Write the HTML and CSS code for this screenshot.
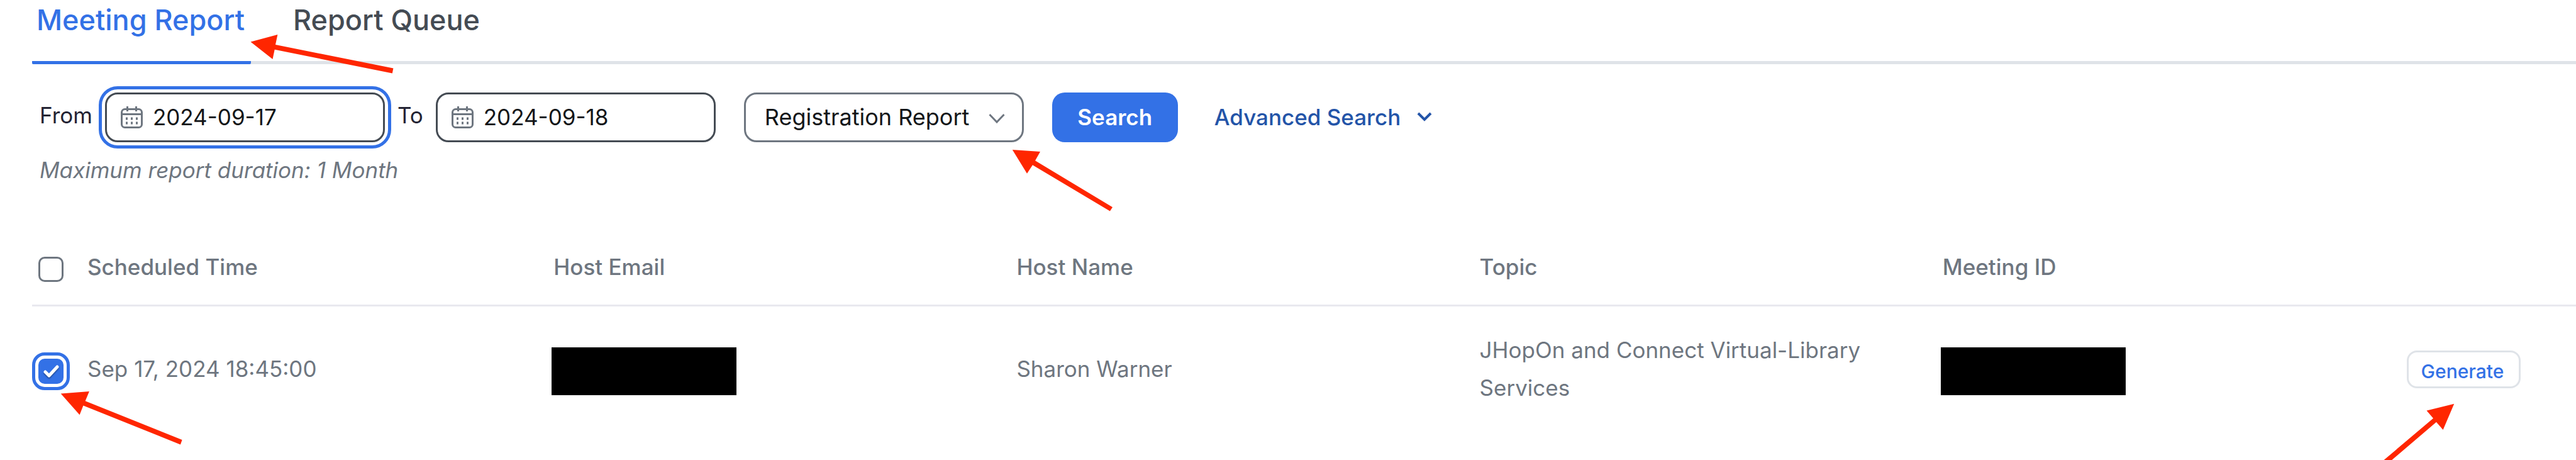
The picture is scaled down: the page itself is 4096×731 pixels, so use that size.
FILE: index.html
```html
<!DOCTYPE html>
<html lang="en">
<head>
    <meta charset="UTF-8" />
    <title>Meeting Report</title>
    <link rel="stylesheet" href="styles.css">
</head>
<body>
<div class="page">
    <nav class="tabs">
        <div class="tab current">
            <a href="#">Meeting Report</a>
            <svg class="arrow arrow-tab" width="228" height="63"><polygon points="0.5,12.5 43.4,1 40,17 227.4,54.5 225.8,62.5 38.7,24.8 35.5,40"/></svg>
        </div>
        <div class="tab"><a href="#">Report Queue</a></div>
    </nav>

    <form class="filters">
        <label for="from">From</label>
        <div class="date focus">
            <input type="text" id="from" value="2024-09-17">
            <svg class="calendar" viewBox="0 0 35 35">
                <rect x="1.5" y="4.5" width="32" height="29" rx="5"/>
                <path d="M1.5 12.5h32M10.5 0v8M24.5 0v8"/>
                <path class="dots" d="M8 19.5h3M16 19.5h3M24 19.5h3M8 26.5h3M16 26.5h3M24 26.5h3"/>
            </svg>
        </div>
        <label for="to">To</label>
        <div class="date">
            <input type="text" id="to" value="2024-09-18">
            <svg class="calendar" viewBox="0 0 35 35">
                <rect x="1.5" y="4.5" width="32" height="29" rx="5"/>
                <path d="M1.5 12.5h32M10.5 0v8M24.5 0v8"/>
                <path class="dots" d="M8 19.5h3M16 19.5h3M24 19.5h3M8 26.5h3M16 26.5h3M24 26.5h3"/>
            </svg>
        </div>
        <div class="report-type">
            <select aria-label="Report type">
                <option>Registration Report</option>
            </select>
            <svg class="chevron" viewBox="0 0 26 16"><path d="M1.5 2L13 14L24.5 2"/></svg>
            <svg class="arrow arrow-select" width="161" height="99"><polygon points="0.8,1 45,4 37,18.2 160,92.3 155.9,98.4 32.9,25.3 24,38.8"/></svg>
        </div>
        <button type="button" class="search">Search</button>
        <a href="#" class="advanced">Advanced Search
            <svg viewBox="0 0 24 16"><path d="M2 2l10 10L22 2"/></svg>
        </a>
    </form>
    <p class="hint">Maximum report duration: 1 Month</p>

    <table class="report">
        <thead>
            <tr>
                <th class="time">
                    <div class="pick">
                        <span class="check"><input type="checkbox" id="all" aria-label="Select all"></span>
                        <label for="all">Scheduled Time</label>
                    </div>
                </th>
                <th>Host Email</th>
                <th>Host Name</th>
                <th>Topic</th>
                <th>Meeting ID</th>
                <th class="action"></th>
            </tr>
        </thead>
        <tbody>
            <tr>
                <td>
                    <div class="pick">
                        <span class="check">
                            <input type="checkbox" id="row1" checked>
                            <svg class="tick" viewBox="0 0 40 40"><path d="M11 21l6 6L30 13"/></svg>
                            <svg class="arrow arrow-check" width="194" height="85"><polygon points="0.7,3.4 45.9,0.1 39.6,15.2 193.6,77 190.9,84.4 36.4,22.6 30.6,37.2"/></svg>
                        </span>
                        <label for="row1">Sep 17, 2024 18:45:00</label>
                    </div>
                </td>
                <td><div class="redacted"></div></td>
                <td>Sharon Warner</td>
                <td>JHopOn and Connect Virtual-Library Services</td>
                <td><div class="redacted"></div></td>
                <td class="action">
                    <div class="generate">
                        <button type="button">Generate</button>
                        <svg class="arrow arrow-generate" width="112" height="97"><polygon points="111.2,0.7 67.5,11.4 78,23.8 -8.7,97 4,97 82.9,29.8 93.6,41.9"/></svg>
                    </div>
                </td>
            </tr>
        </tbody>
    </table>
</div>
</body>
</html>
```
FILE: styles.css
```css
* {margin: 0; padding: 0; box-sizing: border-box;}
body {
    font-family: Inter, "Liberation Sans", sans-serif;
    font-size: 35px;
    line-height: 60px;
    color: #6e7680;
    background-color: #fff;
}
a {text-decoration: none;}
input, select, button {
    font: inherit;
}
.page {
    min-height: 100vh;
    padding-left: 51px;
    overflow: hidden;
}
/* tabs */
.tabs {
    display: flex;
    gap: 60px;
    border-bottom: 5px solid #dfe3e8;
}
.tab {
    position: relative;
    padding: 0 10px 34px 7px;
    margin-bottom: -5px;
    border-bottom: 5px solid transparent;
    font-size: 45px;
    font-weight: 500;
    line-height: 63px;
}
.tab a {
    color: #444b53;
}
.tab.current {
    border-bottom-color: #3371e6;
    border-radius: 2px;
}
.tab.current a {
    color: #3371e6;
}
/* filters */
.filters {
    display: flex;
    align-items: center;
    gap: 20px;
    padding: 45px 0 0 12px;
}
.filters label {
    padding-bottom: 8px;
    color: #232333;
}
.date, .report-type {
    position: relative;
    width: 445px;
}
.date input, .report-type select {
    display: block;
    width: 100%;
    height: 79px;
    padding-bottom: 2px;
    border: 3px solid #444b53;
    border-radius: 20px;
    background-color: #fff;
    color: #131619;
}
.date input {
    padding-left: 73px;
}
.date.focus input {
    outline: 5px solid #3371e6;
    outline-offset: 5px;
}
.calendar {
    position: absolute;
    left: 25px;
    top: 22px;
    width: 35px;
    height: 35px;
    fill: none;
    stroke: #6e7680;
    stroke-width: 3;
}
.calendar .dots {
    stroke-width: 4;
}
.report-type, .search {
    margin-left: 25px;
}
.report-type select {
    appearance: none;
    padding-left: 30px;
    border-color: #6e7680;
    font-size: 36px;
}
.chevron {
    position: absolute;
    right: 30px;
    top: 33px;
    width: 26px;
    height: 16px;
    fill: none;
    stroke: #6e7680;
    stroke-width: 3;
}
.search {
    width: 200px;
    height: 79px;
    padding-bottom: 2px;
    border: none;
    border-radius: 20px;
    background-color: #3371e6;
    color: #fff;
    font-weight: 600;
}
.advanced {
    display: flex;
    align-items: center;
    gap: 26px;
    margin-left: 38px;
    padding-bottom: 2px;
    color: #2354a8;
    font-weight: 500;
}
.advanced svg {
    width: 24px;
    height: 16px;
    fill: none;
    stroke: #2354a8;
    stroke-width: 4;
}
.hint {
    padding: 14px 0 0 12px;
    font-style: italic;
}
/* table */
.report {
    width: 100%;
    margin-top: 65px;
    table-layout: fixed;
    border-collapse: collapse;
    text-align: left;
}
.report th {
    width: 18.2%;
    height: 120px;
    border-bottom: 3px solid #e9e9ef;
    font-weight: 500;
}
.report th.time {
    width: 20.5%;
}
.report td {
    height: 200px;
}
.report .action {
    width: auto;
    padding-right: 88px;
    text-align: right;
}
.pick {
    display: flex;
    align-items: center;
    gap: 38px;
    padding-left: 10px;
}
.check {
    position: relative;
    width: 40px;
    height: 40px;
    margin-top: 8px;
}
.check input {
    display: block;
    appearance: none;
    width: 40px;
    height: 40px;
    border: 3px solid #6e7680;
    border-radius: 10px;
}
.check input:checked {
    border-color: #3371e6;
    background-color: #3371e6;
    outline: 5px solid #3371e6;
    outline-offset: 5px;
}
.tick {
    position: absolute;
    left: 0;
    top: 0;
    width: 40px;
    height: 40px;
    fill: none;
    stroke: #fff;
    stroke-width: 5;
    stroke-linecap: round;
    stroke-linejoin: round;
    filter: drop-shadow(0 2px 1px rgba(0, 0, 0, .35));
    pointer-events: none;
}
.redacted {
    width: 294px;
    height: 76px;
    margin: 8px 0 0 -3px;
    background-color: #000;
}
.generate {
    position: relative;
    display: inline-block;
    vertical-align: middle;
}
.generate button {
    display: block;
    width: 181px;
    height: 60px;
    padding: 0 4px 2px 0;
    border: 3px solid #dfe3e8;
    border-radius: 16px;
    background-color: #fff;
    color: #3371e6;
    font-size: 30px;
    font-weight: 500;
}
/* red pointers */
.arrow {
    position: absolute;
    overflow: visible;
    fill: #ff2600;
    pointer-events: none;
}
.arrow-tab {
    left: 347px;
    top: 54px;
}
.arrow-select {
    left: 426px;
    top: 90px;
}
.arrow-check {
    left: 35px;
    top: 52px;
}
.arrow-generate {
    left: -36px;
    top: 84px;
}
```
